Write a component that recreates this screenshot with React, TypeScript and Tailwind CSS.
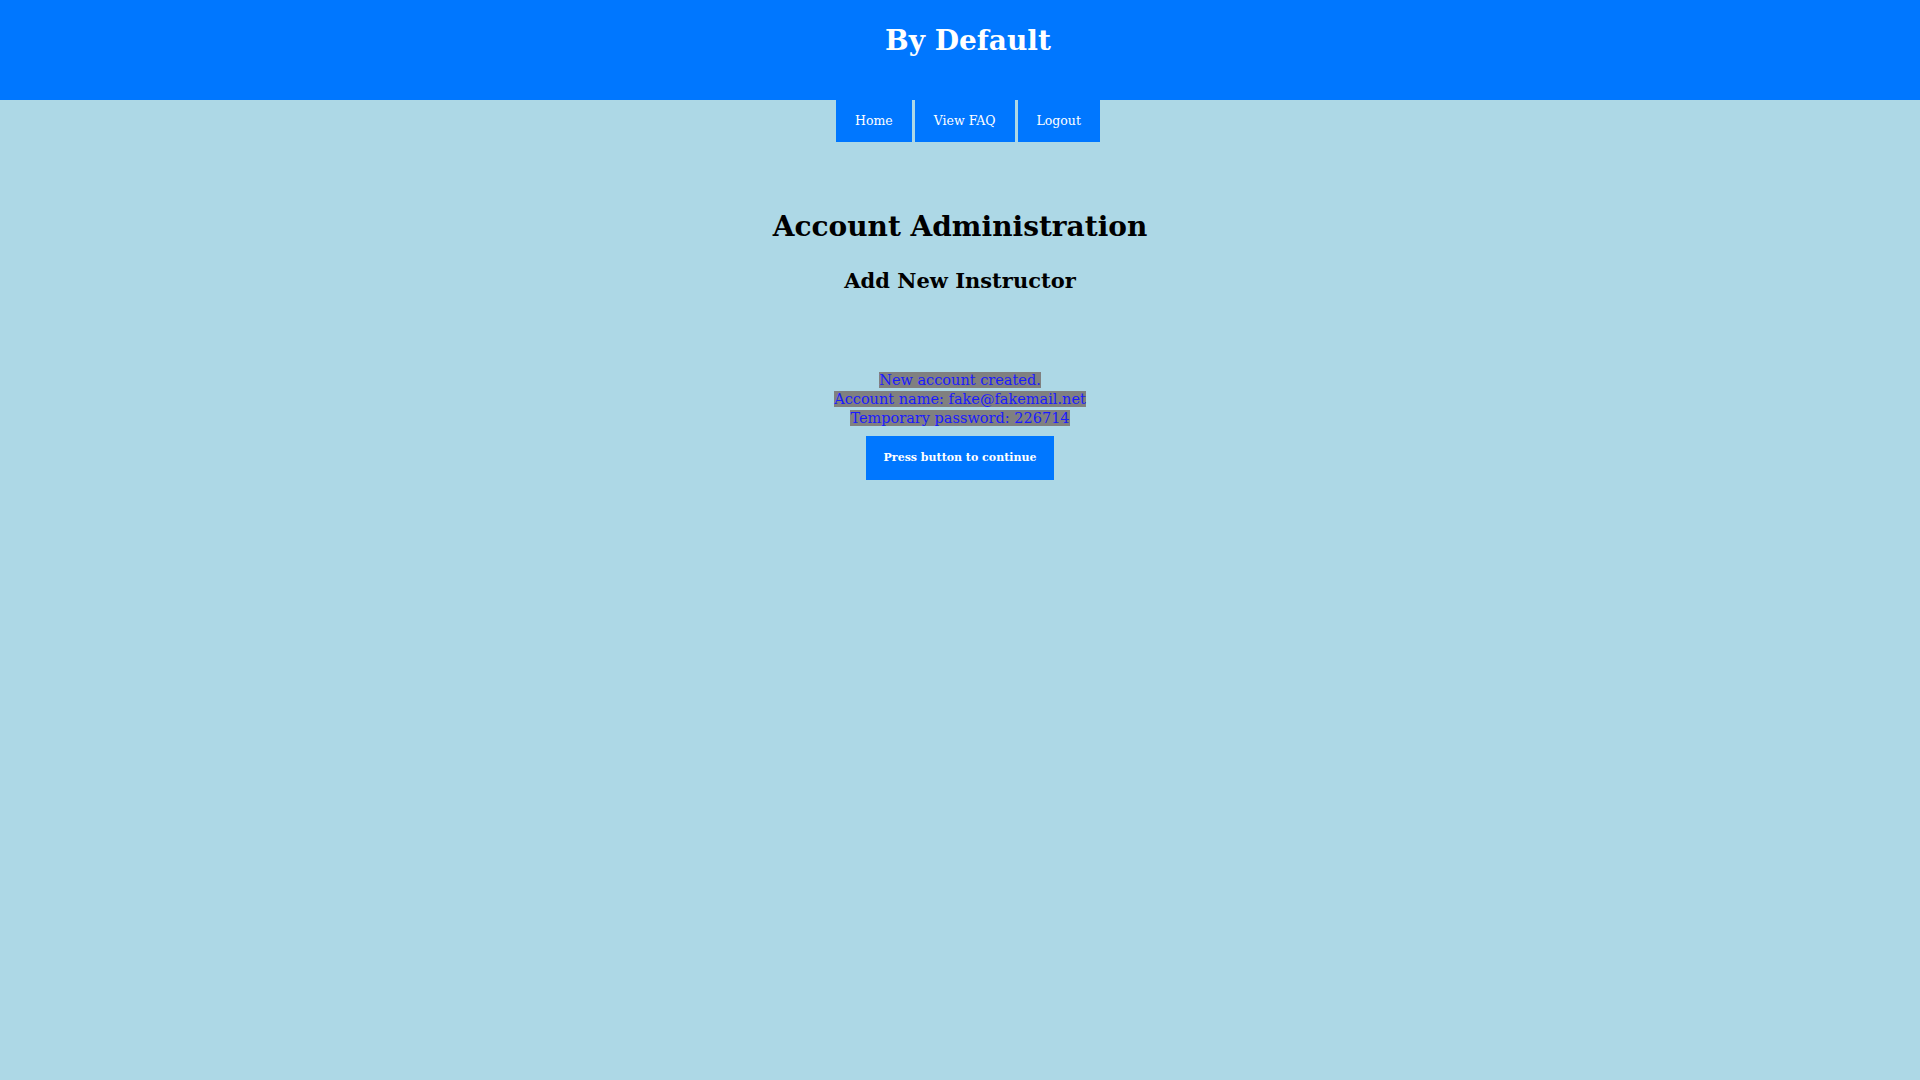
import React from "react";

const font = { fontFamily: '"DejaVu Serif", "Liberation Serif", serif' };

export default function App() {
  const links = ["Home", "View FAQ", "Logout"];
  return (
    <div className="min-h-screen bg-[#add8e6] text-black" style={font}>
      <header className="flex h-[100px] justify-center bg-[#0077ff] pl-4 pt-[23px]">
        <h1 className="text-[28px] font-bold leading-[36px] text-white">By Default</h1>
      </header>
      <nav className="flex justify-center gap-[3px] pl-4">
        {links.map((l) => (
          <a
            key={l}
            href="#"
            className="flex h-[42px] items-center bg-[#0077ff] px-[19px] text-[12.5px] text-white"
          >
            {l}
          </a>
        ))}
      </nav>
      <main className="flex flex-col items-center pt-[68px]">
        <h2 className="text-[28px] font-bold leading-[34px]">Account Administration</h2>
        <h3 className="mt-[23px] text-[21px] font-bold leading-[28px]">Add New Instructor</h3>
        <div className="mt-[76px] text-center text-[14.5px] leading-[19px] text-[#1a1aff]">
          <span className="bg-[#808080]">New account created.</span>
          <br />
          <span className="bg-[#808080]">Account name: fake@fakemail.net</span>
          <br />
          <span className="bg-[#808080]">Temporary password: 226714</span>
        </div>
        <button className="mt-[8px] h-[44px] w-[188px] bg-[#0077ff] text-[11px] font-bold text-white">
          Press button to continue
        </button>
      </main>
    </div>
  );
}
